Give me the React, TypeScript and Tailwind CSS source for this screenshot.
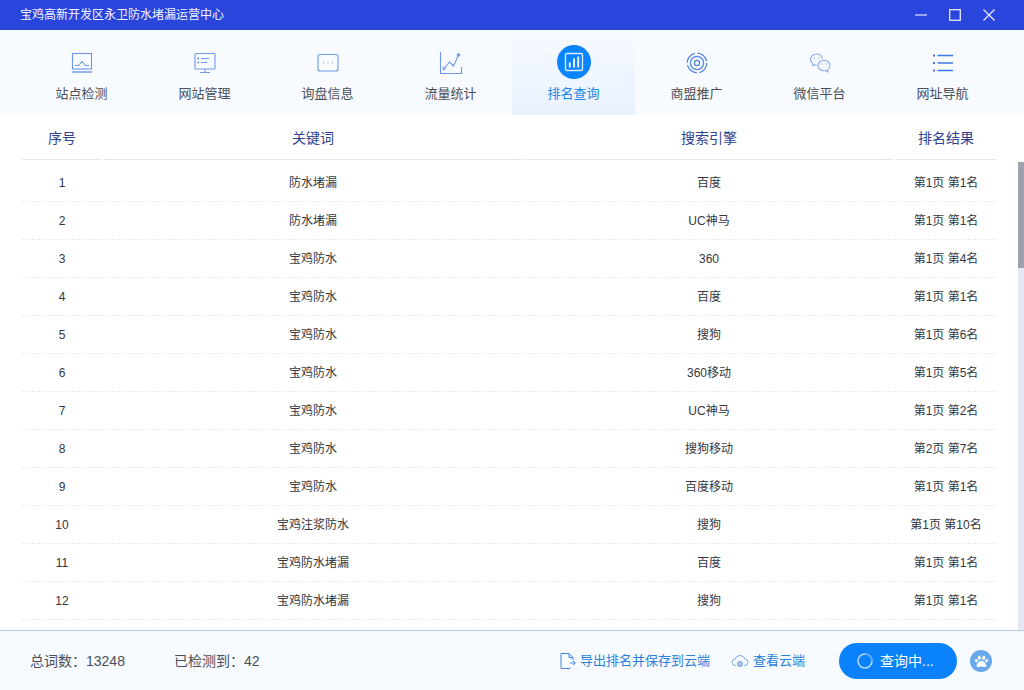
import React from "react";
import { FaPaw } from "react-icons/fa";

const font = "font-['Liberation_Sans','Noto_Sans_CJK_SC',sans-serif]";

const rows: [string, string, string, string][] = [
  ["1", "防水堵漏", "百度", "第1页 第1名"],
  ["2", "防水堵漏", "UC神马", "第1页 第1名"],
  ["3", "宝鸡防水", "360", "第1页 第4名"],
  ["4", "宝鸡防水", "百度", "第1页 第1名"],
  ["5", "宝鸡防水", "搜狗", "第1页 第6名"],
  ["6", "宝鸡防水", "360移动", "第1页 第5名"],
  ["7", "宝鸡防水", "UC神马", "第1页 第2名"],
  ["8", "宝鸡防水", "搜狗移动", "第2页 第7名"],
  ["9", "宝鸡防水", "百度移动", "第1页 第1名"],
  ["10", "宝鸡注浆防水", "搜狗", "第1页 第10名"],
  ["11", "宝鸡防水堵漏", "百度", "第1页 第1名"],
  ["12", "宝鸡防水堵漏", "搜狗", "第1页 第1名"],
];

const Svg = ({ children }: { children: React.ReactNode }) => (
  <svg width="24" height="24" viewBox="0 0 24 24" fill="none" stroke="#6f97e6" strokeWidth="1.1">
    {children}
  </svg>
);

const icons: React.ReactNode[] = [
  <Svg key="a">
    <rect x="2.5" y="2.5" width="19" height="15.5" />
    <path d="M5 14.5h3.5l3.5-4 3.5 4H19" />
    <path d="M2 21h20" strokeWidth="1.6" stroke="#7ea5ee" />
  </Svg>,
  <Svg key="b">
    <rect x="2" y="2.5" width="20" height="15.5" rx="1" />
    <path d="M8 7.5h8M8 11.5h6M12 18v3.5M7 21.5h10" />
    <path d="M4.5 7.5h1.5M4.5 11.5h1.5" strokeWidth="1.6" stroke="#3f7be8" />
  </Svg>,
  <Svg key="c">
    <rect x="2" y="3.5" width="20" height="16.5" rx="2" />
    <path d="M7.2 12h1M11.5 12h1M15.8 12h1" strokeWidth="1.2" />
  </Svg>,
  <Svg key="d">
    <path d="M1.5 1v21.5h21V16" />
    <circle cx="5" cy="17.5" r="1.2" />
    <circle cx="19.5" cy="4" r="1.2" fill="#6f97e6" />
    <path d="M6 16.5l4.5-5.5 4 4 4.5-10" />
  </Svg>,
  <svg key="e" width="34" height="34" viewBox="0 0 34 34" fill="none">
    <circle cx="17" cy="17" r="17" fill="#0a84ff" />
    <rect x="8.5" y="8.5" width="17" height="17" rx="1.5" stroke="#fff" strokeWidth="1.4" opacity="0.85" />
    <path d="M12.8 22.5v-5M17 22.5v-9M21.2 22.5V11.5" stroke="#fff" strokeWidth="2" opacity="0.9" />
  </svg>,
  <Svg key="f">
    <circle cx="12" cy="12" r="9.8" stroke="#5585e6" strokeWidth="1.3" strokeDasharray="13 2.4" />
    <circle cx="12" cy="12" r="6.6" stroke="#5585e6" strokeWidth="1.3" />
    <circle cx="12" cy="12" r="2.6" stroke="#5585e6" strokeWidth="1.3" />
  </Svg>,
  <Svg key="g">
    <path d="M14.500 7.500C13.800 5 11.500 3 8.800 3 5.500 3 2.500 5.200 2.500 8.500c0 1.900 1 3.500 2.600 4.600l-.5 1.700 2.100-1c.6.200 1.300.300 2 .300" stroke="#8aa9ea" />
    <path d="M22 14.500c0-3-2.600-5.300-5.900-5.300S10 11.500 10 14.500s2.800 5.300 6.100 5.300c.7 0 1.300-.1 1.900-.300l2 1.200-.5-1.800c1.500-1 2.500-2.600 2.500-4.400z" stroke="#8aa9ea" />
    <path d="M6 7h.8M10.500 7h.8M13.500 13h.8M18 13h.8" stroke="#6f97e6" strokeWidth="1.3" />
  </Svg>,
  <Svg key="h">
    <path d="M2 4.500h2M2 12h2M2 19.500h2" stroke="#3f78ea" strokeWidth="2" />
    <path d="M6.500 4.500H22M6.500 12H22M6.500 19.500H22" stroke="#3f78ea" strokeWidth="1.400" />
  </Svg>,
];

const labels = ["站点检测", "网站管理", "询盘信息", "流量统计", "排名查询", "商盟推广", "微信平台", "网址导航"];

const Row = ({ cells, className }: { cells: string[]; className: string }) => (
  <div className={`flex gap-[2px] ${className}`}>
    <div className="w-[80px] text-center">{cells[0]}</div>
    <div className="w-[418px] text-center">{cells[1]}</div>
    <div className="w-[370px] text-center">{cells[2]}</div>
    <div className="w-[100px] text-center">{cells[3]}</div>
  </div>
);

export default function App() {
  return (
    <div className={`${font} flex h-[690px] w-[1024px] flex-col overflow-hidden bg-white`}>
      <header className="flex h-[30px] items-center justify-between bg-[#2a45dc] pl-[20px] pr-[29px]">
        <span className="text-[12px] text-[#f2f5ff]">宝鸡高新开发区永卫防水堵漏运营中心</span>
        <div className="flex items-center gap-[22px]">
          <svg width="12" height="12" viewBox="0 0 12 12" stroke="#d5dcfa" strokeWidth="1.3"><path d="M0 6h12" /></svg>
          <svg width="12" height="12" viewBox="0 0 12 12" fill="none" stroke="#e6eafc" strokeWidth="1.3"><rect x="0.700" y="0.700" width="10.600" height="10.600" /></svg>
          <svg width="12" height="12" viewBox="0 0 12 12" stroke="#e6eafc" strokeWidth="1.3"><path d="M0.500 0.500l11 11M11.500 0.500l-11 11" /></svg>
        </div>
      </header>

      <nav className="flex h-[85px] bg-[#f7faff] pl-[20px]">
        {labels.map((label, i) => (
          <div
            key={label}
            className={`flex h-full w-[123px] flex-col items-center ${i === 4 ? "bg-gradient-to-b from-[#f7faff] to-[#e8f2fe] pt-[15px]" : "pt-[21px]"}`}
          >
            <div className={`flex items-center justify-center ${i === 4 ? "h-[34px]" : "h-[24px]"}`}>{icons[i]}</div>
            <span className={`text-[13px] leading-[18px] ${i === 4 ? "mt-[6px] text-[#1d86e6]" : "mt-[10px] text-[#4a4f57]"}`}>{label}</span>
          </div>
        ))}
      </nav>

      <div className="flex min-h-0 flex-1">
        <main className="w-[1018px] pl-[22px]">
          <div className="flex h-[45px] w-[974px] gap-[2px] text-[14px] text-[#2d4390]">
            {[
              ["序号", "w-[80px]"],
              ["关键词", "w-[418px]"],
              ["搜索引擎", "w-[370px]"],
              ["排名结果", "w-[100px]"],
            ].map(([text, width]) => (
              <div key={text} className={`${width} border-b border-[#e3e8ee] pt-[14px] text-center leading-[18px]`}>{text}</div>
            ))}
          </div>
          <div className="w-[974px] pt-[4px]">
            {rows.map((r) => (
              <Row key={r[0]} cells={r} className="h-[38px] items-center border-b border-dashed border-[#e8ecf1] pt-[1px] text-[12px] text-[#33373e]" />
            ))}
          </div>
        </main>
        <div className="flex w-[6px] flex-col bg-white pt-[47px]">
          <div className="h-[106px] bg-[#9ea1ae]" />
          <div className="flex-1 bg-[#e6e8f4]" />
        </div>
      </div>

      <footer className="flex h-[60px] items-center border-t border-[#b9c9e4] bg-[#f7faff] pl-[30px] pr-[32px] pt-[1px] text-[#4a4f57]">
        <span className="w-[144px] text-[14px]">总词数：13248</span>
        <span className="text-[14px]">已检测到：42</span>
        <div className="ml-auto flex items-center text-[13px] text-[#2a7fd8]">
          <svg width="18" height="18" viewBox="0 0 18 18" fill="none" stroke="#3f86dc" strokeWidth="1">
            <path d="M11 15.500v1H2V1.500h8l4 4V8M10 1.500v4h4M11 11h5M14 9l2.500 2-2.500 2" />
          </svg>
          <span className="ml-[3px]">导出排名并保存到云端</span>
          <svg className="ml-[21px]" width="18" height="18" viewBox="0 0 18 18" fill="none" stroke="#7ea7e2" strokeWidth="1">
            <path d="M5 13.500H4.500a3.200 3.200 0 0 1-.3-6.400 5 5 0 0 1 9.600 0 3.200 3.200 0 0 1-.3 6.400H13" />
            <circle cx="9" cy="12" r="2.600" fill="#a9c3ea" />
          </svg>
          <span className="ml-[4px]">查看云端</span>
          <button className="ml-[34px] flex h-[36px] w-[118px] items-center rounded-full bg-[#0a82fb] pl-[18px] text-[14px] text-white">
            <svg width="16" height="16" viewBox="0 0 16 16" fill="none">
              <circle cx="8" cy="8" r="7" stroke="#b9dcff" strokeWidth="1.500" />
              <path d="M8 1a7 7 0 0 1 7 7" stroke="#0f6fd0" strokeWidth="1.500" opacity="0.4" />
            </svg>
            <span className="ml-[7px]">查询中...</span>
          </button>
          <div className="ml-[13px] flex h-[22px] w-[22px] items-center justify-center rounded-full bg-[#6aa8ee]">
            <FaPaw className="text-[13px] text-white" />
          </div>
        </div>
      </footer>
    </div>
  );
}
